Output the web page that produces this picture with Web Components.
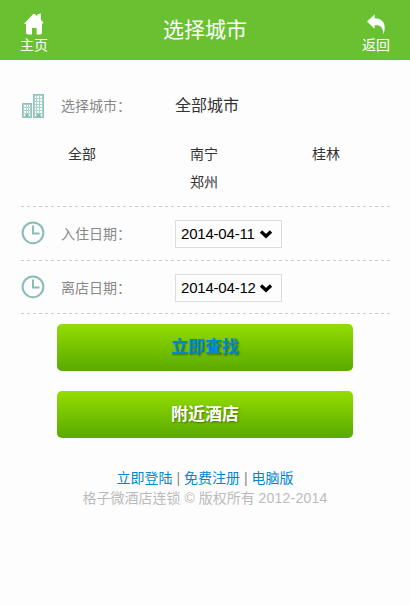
<!DOCTYPE html>
<html lang="zh-CN">
<head>
<meta charset="utf-8">
<title>选择城市</title>
<style>
body{margin:0;background:#fdfdfd;font:14px/20px "Liberation Sans","Noto Sans CJK SC",sans-serif;color:#333;height:605px;overflow:hidden}
</style>
</head>
<body>
<hotel-page></hotel-page>
<script>
function define(name, html) {
  const t = document.createElement('template');
  t.innerHTML = html;
  customElements.define(name, class extends HTMLElement {
    constructor() {
      super();
      this.attachShadow({mode: 'open'}).append(t.content.cloneNode(true));
    }
  });
}

define('nav-link', `
<style>
:host{display:flex;flex-direction:column;align-items:center;width:68px;color:#fff;font-size:14px;line-height:18px}
::slotted(svg){display:block;width:24px;height:24px}
</style><slot name="icon"></slot><span><slot></slot></span>`);

define('page-header', `
<style>
:host{display:flex;justify-content:space-between;height:60px;background:#69c132;color:#fff;box-sizing:border-box}
h1{margin:0;font-weight:400;font-size:21px;line-height:60px}
nav-link{padding-top:12px}
</style>
<nav-link><svg slot="icon" viewBox="0 0 24 24"><path fill="#fff" d="M2.5 11.2 11 2.3Q12 1.2 13 2.3L15.2 4.5V2.4L18.8 1.2V7.6L21.3 10.4Q21.6 11.6 20 11.6V20.5Q20 22.5 18 22.5H14.6V16H10V22.5H6Q4 22.5 4 20.5V12H3Q2.2 12 2.5 11.2Z"/></svg>主页</nav-link>
<h1><slot></slot></h1>
<nav-link><svg slot="icon" viewBox="0 0 24 24"><path fill="#fff" d="M3 9.6 10.6 2.6V6.3C17.5 6.5 21.5 10.5 20.6 17.6Q20.3 20 19.2 22.3C19.3 16.2 17.2 13.2 10.6 13.1V16.8Z"/></svg>返回</nav-link>`);

define('clock-icon', `
<style>:host{display:block;width:24px;height:26px}svg{display:block}</style>
<svg width="24" height="24" viewBox="0 0 24 24" fill="none" stroke="#8abdb5" stroke-width="2"><circle cx="12" cy="11.8" r="10.4"/><path d="M12 4.5V12.5H18.5"/></svg>`);

define('building-icon', `
<style>:host{display:block;width:24px;height:24px}svg{display:block}</style>
<svg width="24" height="24" viewBox="0 0 24 24">
<path fill="#a9d2cb" d="M1 9H11V24H1ZM12 0H23V24H12Z"/>
<path fill="#fafdfc" d="M3 11h2v2H3zM6 11h1v2H6zM8 11h1v2H8zM3 14h2v2H3zM6 14h1v2H6zM8 14h1v2H8zM3 17h2v2H3zM6 17h1v2H6zM8 17h1v2H8zM3 20h1v2H3zM8 20h1v2H8zM14 2h1v2h-1zM16 2h2v2h-2zM19 2h2v2h-2zM14 5h1v2h-1zM16 5h2v2h-2zM19 5h2v2h-2zM14 8h1v2h-1zM16 8h2v2h-2zM19 8h2v2h-2zM14 11h1v2h-1zM16 11h2v2h-2zM19 11h2v2h-2zM14 14h1v2h-1zM16 14h2v2h-2zM19 14h2v2h-2zM14 17h1v2h-1zM16 17h2v2h-2zM19 17h2v2h-2zM14 20h1v2h-1zM20 20h1v2h-1z"/>
<path fill="none" stroke="#8dc3b9" d="M1.5 9.5h9v14h-9zM12.5.5h10v23h-10z"/>
<path fill="#83bdb3" d="M5 20h2v3H5zM16 20h3v3h-3z"/></svg>`);

define('form-row', `
<style>
:host{display:grid;grid-template-columns:40px 114px 1fr;align-items:center}
.label{color:#888;font-size:14px}
.value{font-size:16px}
</style><slot name="icon"></slot><span class="label"><slot name="label"></slot></span><div class="value"><slot></slot></div>`);

define('date-select', `
<style>
:host{display:flex;align-items:center;box-sizing:border-box;width:107px;height:28px;border:1px solid #ddd;padding-left:5px;color:#000;font-size:15px;line-height:26px;white-space:nowrap}
span{width:75px;letter-spacing:-.2px}
svg{display:block;margin-left:3px}
</style><span><slot></slot></span>
<svg width="14" height="10" viewBox="0 0 14 10"><path d="M2 2.6 7 7.2 12 2.6" fill="none" stroke="#000" stroke-width="3.4"/></svg>`);

define('city-grid', `
<style>:host{display:grid;grid-template-columns:repeat(3,122px);grid-auto-rows:28px;padding-right:3px;justify-content:center;text-align:center;line-height:28px}</style><slot></slot>`);

define('search-form', `
<style>
:host{display:block;margin:0 20px 0 21px}
section{box-sizing:border-box;padding-bottom:1px;background:repeating-linear-gradient(90deg,#ccc 0 3px,transparent 3px 6px) bottom/100% 1px no-repeat}
.city{height:147px;padding-top:33px}
.city form-row{height:26px}
city-grid{margin-top:21px}
.in{height:54px}.out{height:53px}
.in form-row,.out form-row{height:53px}
</style>
<section class="city"><form-row><building-icon slot="icon"></building-icon><span slot="label">选择城市：</span>全部城市</form-row>
<city-grid><span>全部</span><span>南宁</span><span>桂林</span><span></span><span>郑州</span></city-grid></section>
<section class="in"><form-row><clock-icon slot="icon"></clock-icon><span slot="label">入住日期：</span><date-select>2014-04-11</date-select></form-row></section>
<section class="out"><form-row><clock-icon slot="icon"></clock-icon><span slot="label">离店日期：</span><date-select>2014-04-12</date-select></form-row></section>`);

define('green-button', `
<style>
:host{display:block;height:47px;border-radius:5px;background:linear-gradient(#94dd00,#59a900);color:var(--label,#fff);font-weight:700;font-size:17px;line-height:47px;text-align:center;text-shadow:1px 1px 2px rgba(0,0,0,.4)}
</style><slot></slot>`);

define('page-footer', `
<style>
:host{display:block;text-align:center;color:#bbb;line-height:20px}
a{color:#08c}
.links{color:#888}
.years{letter-spacing:.22px}
</style>
<div class="links"><a>立即登陆</a> | <a>免费注册</a> | <a>电脑版</a></div><div>格子微酒店连锁 © 版权所有 <span class="years">2012-2014</span></div>`);

define('hotel-page', `
<style>
:host{display:block}
.actions{display:grid;gap:20px;margin:10px 57px 0}
.find{--label:#08c}
page-footer{margin-top:30px}
</style>
<page-header>选择城市</page-header>
<search-form></search-form>
<div class="actions"><green-button class="find">立即查找</green-button><green-button>附近酒店</green-button></div>
<page-footer></page-footer>`);
</script>
</body>
</html>
